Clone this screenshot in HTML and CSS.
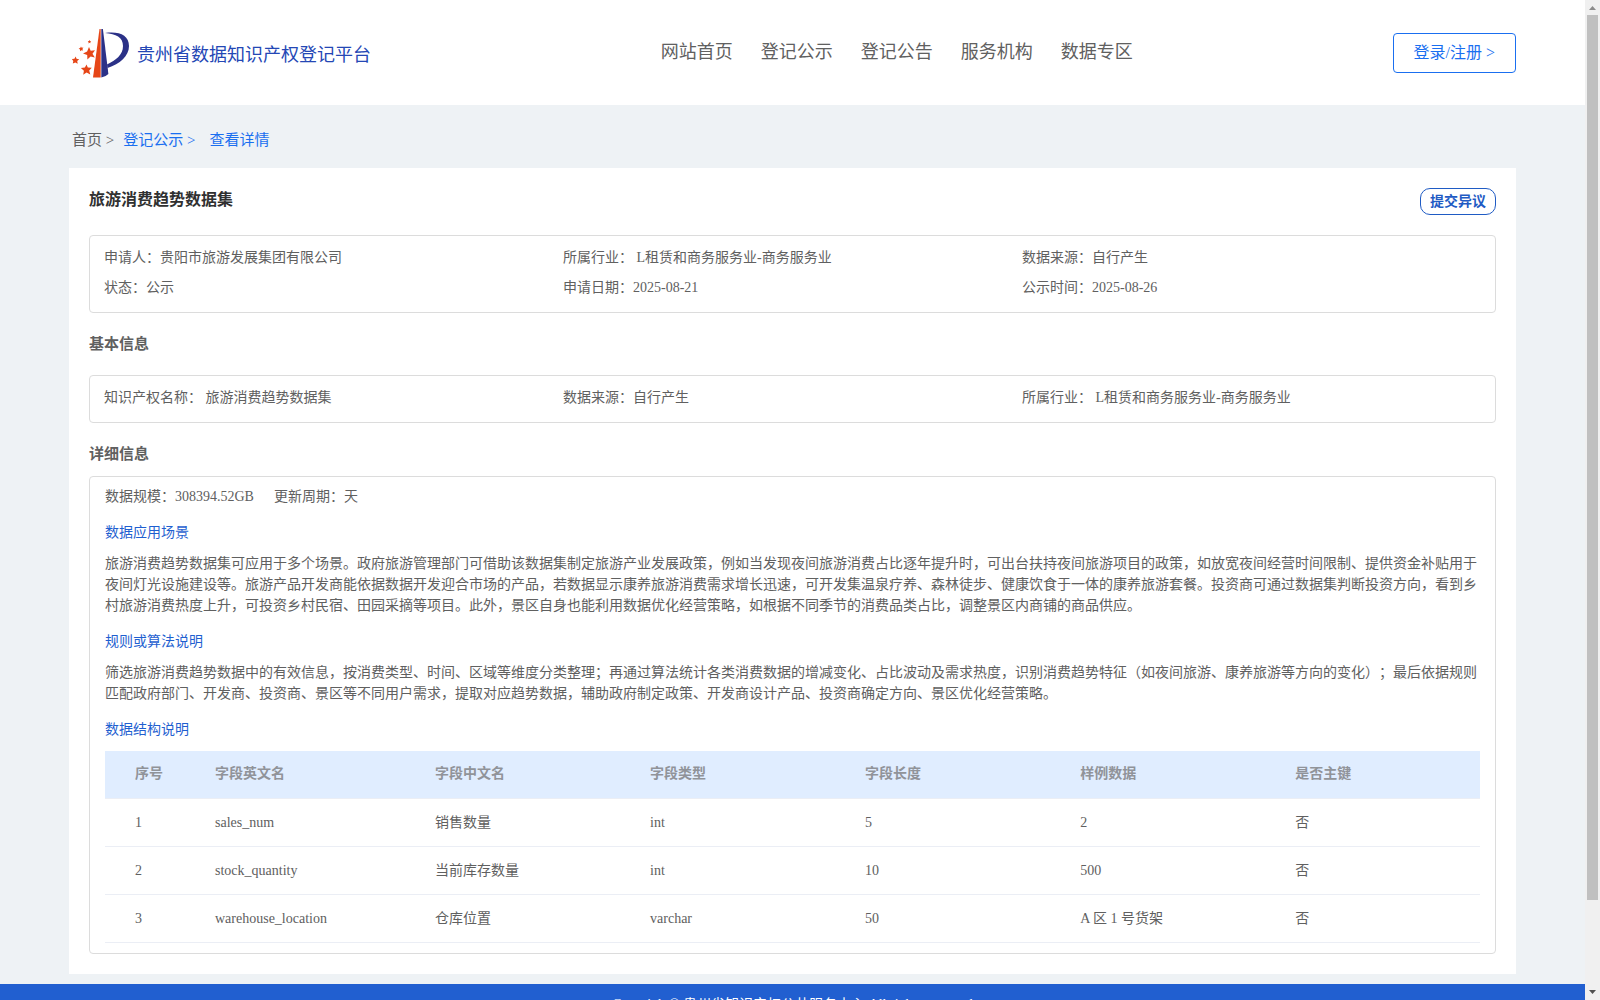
FILE: index.html
```html
<!DOCTYPE html>
<html lang="zh-CN">
  <head>
    <meta charset="UTF-8" />
    <meta name="viewport" content="width=device-width, initial-scale=1" />
    <title>贵州省数据知识产权登记平台</title>
    <link rel="stylesheet" href="styles.css">
  </head>
  <body>
    <div class="page">
      <header class="header">
        <a class="logo" href="#">
          <svg width="58" height="50" viewBox="0 -1 58 50">
            <path fill="#e64617" d="M27.500 0h1.200v48.500h-7.700z" />
            <path fill="#2b3187" d="M29.300 0h1.600l5.500 45q-3 3-7.100 3.500z" />
            <path fill="#2b3187" d="M33 4c14-2 24 2 24 13 0 10-9 18-21.500 22l-.500-3.500C44 31 51 26 51 17 51 8 44 5 33 4z" />
            <g fill="#e64617">
              <path d="M17 18l1.700 3.800 4.300-.600-2.500 3.600 2.300 3.700-4.200-1.100-3.200 3-.200-4.400-4.200-1.600 4.100-1.800z" />
              <path d="M14.500 35.500l1.300 3 4 .200-2.600 2.800 1.100 4-3.700-2-3.400 2.200.700-4-3-2.600 4-.700z" />
              <path d="M3.700 27.500l.800 2.200 2.700.500-2 1.800.5 2.700-2.400-1.300-2.500 1.100.5-2.600-1.500-2 2.600-.200z" />
              <path d="M9 17.500l.700 1.300 1.700-.200-1 1.400.7 1.600-1.700-.400-1.300 1-.1-1.700-1.400-.900 1.600-.700z" />
              <path d="M17.500 11l.5 1 1.200.200-.9.900.2 1.200-1-.500-1.100.6.200-1.300-.9-.8 1.200-.200z" />
            </g>
          </svg>
          <span>贵州省数据知识产权登记平台</span>
        </a>
        <nav class="nav">
          <a href="#">网站首页</a>
          <a href="#">登记公示</a>
          <a href="#">登记公告</a>
          <a href="#">服务机构</a>
          <a href="#">数据专区</a>
        </nav>
        <button class="login-button" type="button">登录/注册 &gt;</button>
      </header>

      <main class="main">
        <div class="crumbs">
          <a class="home" href="#">首页 &gt;</a>
          <a href="#">登记公示 &gt;</a>
          <a class="current" href="#">查看详情</a>
        </div>

        <div class="card">
          <div class="card-head">
            <h2>旅游消费趋势数据集</h2>
            <button class="objection-button" type="button">提交异议</button>
          </div>

          <div class="box info">
            <div>申请人：贵阳市旅游发展集团有限公司</div>
            <div>所属行业： L租赁和商务服务业-商务服务业</div>
            <div>数据来源：自行产生</div>
            <div>状态：公示</div>
            <div>申请日期：2025-08-21</div>
            <div>公示时间：2025-08-26</div>
          </div>

          <h3 class="basic-title">基本信息</h3>
          <div class="box info">
            <div>知识产权名称： 旅游消费趋势数据集</div>
            <div>数据来源：自行产生</div>
            <div>所属行业： L租赁和商务服务业-商务服务业</div>
          </div>

          <h3 class="detail-title">详细信息</h3>
          <div class="box detail">
            <div class="scale">
              <span>数据规模：308394.52GB</span>
              <span>更新周期：天</span>
            </div>
            <h4>数据应用场景</h4>
            <p>旅游消费趋势数据集可应用于多个场景。政府旅游管理部门可借助该数据集制定旅游产业发展政策，例如当发现夜间旅游消费占比逐年提升时，可出台扶持夜间旅游项目的政策，如放宽夜间经营时间限制、提供资金补贴用于夜间灯光设施建设等。旅游产品开发商能依据数据开发迎合市场的产品，若数据显示康养旅游消费需求增长迅速，可开发集温泉疗养、森林徒步、健康饮食于一体的康养旅游套餐。投资商可通过数据集判断投资方向，看到乡村旅游消费热度上升，可投资乡村民宿、田园采摘等项目。此外，景区自身也能利用数据优化经营策略，如根据不同季节的消费品类占比，调整景区内商铺的商品供应。</p>
            <h4>规则或算法说明</h4>
            <p>筛选旅游消费趋势数据中的有效信息，按消费类型、时间、区域等维度分类整理；再通过算法统计各类消费数据的增减变化、占比波动及需求热度，识别消费趋势特征（如夜间旅游、康养旅游等方向的变化）；最后依据规则匹配政府部门、开发商、投资商、景区等不同用户需求，提取对应趋势数据，辅助政府制定政策、开发商设计产品、投资商确定方向、景区优化经营策略。</p>
            <h4>数据结构说明</h4>
            <table>
              <colgroup>
                <col class="col-index">
                <col class="col-name">
                <col class="col-text" span="4">
                <col>
              </colgroup>
              <thead>
                <tr>
                  <th>序号</th>
                  <th>字段英文名</th>
                  <th>字段中文名</th>
                  <th>字段类型</th>
                  <th>字段长度</th>
                  <th>样例数据</th>
                  <th>是否主键</th>
                </tr>
              </thead>
              <tbody>
                <tr>
                  <td>1</td>
                  <td>sales_num</td>
                  <td>销售数量</td>
                  <td>int</td>
                  <td>5</td>
                  <td>2</td>
                  <td>否</td>
                </tr>
                <tr>
                  <td>2</td>
                  <td>stock_quantity</td>
                  <td>当前库存数量</td>
                  <td>int</td>
                  <td>10</td>
                  <td>500</td>
                  <td>否</td>
                </tr>
                <tr>
                  <td>3</td>
                  <td>warehouse_location</td>
                  <td>仓库位置</td>
                  <td>varchar</td>
                  <td>50</td>
                  <td>A 区 1 号货架</td>
                  <td>否</td>
                </tr>
              </tbody>
            </table>
          </div>
        </div>
      </main>

      <footer class="footer">Copyright© 贵州省知识产权公共服务中心 All rights reserved</footer>
    </div>

    <div class="scrollbar">
      <svg width="15" height="15" viewBox="0 0 15 15"><path fill="#8b8b8b" d="M4 10h7L7.500 6z" /></svg>
      <div class="thumb"></div>
      <svg width="15" height="15" viewBox="0 0 15 15"><path fill="#505050" d="M4 5h7L7.500 9z" /></svg>
    </div>
  </body>
</html>
```

FILE: styles.css
```css
* {
  box-sizing: border-box;
}

body {
  margin: 0;
  height: 100vh;
  display: flex;
  overflow: hidden;
  background-color: #eef2f5;
  color: #606060;
  font-family: "Liberation Serif", "Noto Sans CJK SC", serif;
  font-size: 14px;
  text-spacing-trim: space-all;
}

h2,
h3,
h4,
p {
  margin: 0;
}

a {
  color: inherit;
  text-decoration: none;
}

button {
  background-color: white;
  font-family: inherit;
  padding: 0;
  cursor: pointer;
}

.page {
  flex: 1;
  min-width: 0;
  overflow: hidden;
}

/* header */
.header {
  height: 105px;
  padding: 0 69px;
  background-color: white;
  display: flex;
  justify-content: space-between;
  align-items: center;
}

.logo {
  display: flex;
  align-items: center;
  gap: 7px;
  padding-left: 3px;
  color: #2447b5;
  font-size: 18px;
}

.nav {
  display: flex;
  gap: 28px;
  padding: 0 0 6px 30px;
  font-size: 18px;
}

.login-button {
  height: 40px;
  padding: 0 20px 3px;
  border: 1px solid #1a6ff0;
  border-radius: 4px;
  color: #1a6ff0;
  font-size: 16px;
}

/* content */
.main {
  padding: 0 69px 10px;
}

.crumbs {
  display: flex;
  gap: 9px;
  height: 63px;
  padding: 25px 3px 0;
  color: #1a6ff0;
  font-size: 15px;
  line-height: 20px;
}

.crumbs .home {
  color: #606060;
}

.crumbs .current {
  padding-left: 5px;
}

.card {
  padding: 20px;
  background-color: white;
}

.card-head {
  display: flex;
  justify-content: space-between;
  height: 47px;
}

.card-head h2 {
  color: #303030;
  font-size: 16px;
  line-height: 24px;
}

.objection-button {
  width: 76px;
  height: 27px;
  padding-bottom: 3px;
  border: 1px solid #1f5bc4;
  border-radius: 10px;
  color: #1f5bc4;
  font-size: 14px;
  font-weight: bold;
}

.box {
  border: 1px solid #dcdcdc;
  border-radius: 4px;
}

.info {
  display: grid;
  grid-template-columns: repeat(3, 1fr);
  padding: 7px 14px 9px;
  line-height: 30px;
}

h3 {
  font-size: 15px;
  line-height: 20px;
}

.basic-title {
  padding: 21px 0;
}

.detail-title {
  padding: 21px 0 12px;
}

.detail {
  padding: 10px 15px;
}

.scale {
  display: flex;
  gap: 20px;
  line-height: 20px;
}

.detail h4 {
  padding: 16px 0 10px;
  color: #1f5fd0;
  font-size: 14px;
  font-weight: normal;
  line-height: 20px;
}

.detail p {
  line-height: 21px;
}

table {
  width: 100%;
  margin-top: 1px;
  table-layout: fixed;
  border-spacing: 0;
}

.col-index {
  width: 110px;
}

.col-name {
  width: 16%;
}

.col-text {
  width: 15.64%;
}

th,
td {
  height: 48px;
  padding: 0;
  border-bottom: 1px solid #ebeef5;
  text-align: left;
  line-height: 20px;
}

th {
  padding-bottom: 2px;
  background-color: #e0edff;
  color: #909399;
}

th:first-child,
td:first-child {
  padding-left: 30px;
}

.footer {
  padding: 11px 0;
  background-color: #215fd0;
  color: white;
  text-align: center;
  font-size: 14px;
  line-height: 20px;
}

/* scrollbar */
.scrollbar {
  width: 15px;
  display: flex;
  flex-direction: column;
  background-color: #f0f0f0;
}

.thumb {
  width: 11px;
  height: 88.5%;
  margin: 0 auto;
  background-color: #c0c0c0;
}

.scrollbar svg:last-child {
  margin-top: auto;
}
```
